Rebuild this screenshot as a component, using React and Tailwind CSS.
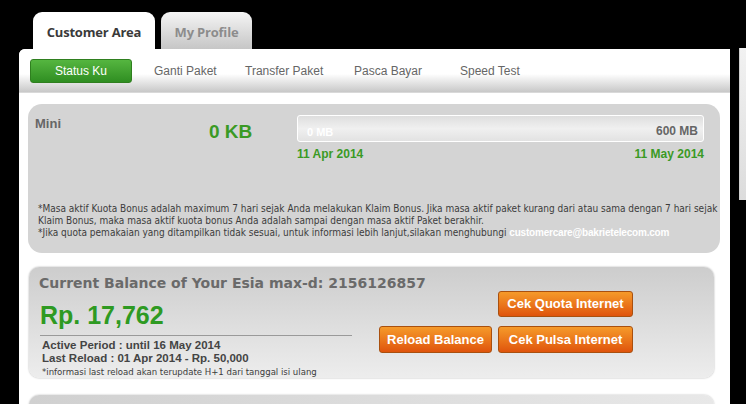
import React from "react";

const sans = "font-['Liberation_Sans',Arial,sans-serif]";
const tahoma = "font-['DejaVu_Sans_Condensed','DejaVu_Sans',sans-serif]";

function OrangeButton({ children, className = "h-[27px]" }) {
  return (
    <button
      className={`rounded-[3px] border border-[#a9500f] bg-linear-to-b from-[#f59a2a] to-[#df530b] text-white text-[13px] font-bold ${sans} ${className}`}
    >
      {children}
    </button>
  );
}

export default function App() {
  const navItems = ["Ganti Paket", "Transfer Paket", "Pasca Bayar", "Speed Test"];
  const navWidths = ["w-[91px]", "w-[109px]", "w-[106px]", "w-[80px]"];

  return (
    <div className="w-[746px] h-[404px] bg-black overflow-hidden">
      {/* tabs */}
      <div className="flex items-end gap-[6px] pl-[33px] pt-[12px] h-[49px]">
        <div className="w-[122px] h-[37px] rounded-t-[9px] bg-white flex items-center justify-center">
          <span className="font-['Open_Sans',sans-serif] font-bold text-[13px] text-[#3a3a3a] tracking-[-0.2px] mt-[5px]">Customer Area</span>
        </div>
        <div className="w-[91px] h-[37px] rounded-t-[9px] bg-linear-to-b from-[#f5f5f5] to-[#c6c6c6] flex items-center justify-center">
          <span className="font-['Open_Sans',sans-serif] font-bold text-[13px] text-[#8c8c8c] tracking-[-0.2px] mt-[4px]">My Profile</span>
        </div>
      </div>

      <div className="flex items-start">
        {/* main panel */}
        <div className="ml-[19px] w-[711px] h-[355px] bg-white rounded-tl-[6px] overflow-hidden">
          {/* sub nav */}
          <div className="h-[44px] flex items-center pl-[11px] bg-linear-to-b from-white from-[58%] to-[#c8c8c8] border-b border-[#d9d9d9]">
            <div className={`w-[102px] h-[24px] rounded-[3px] border border-[#2f7f1f] bg-linear-to-b from-[#55b640] to-[#2f8e21] flex items-center justify-center text-white text-[12px] ${sans}`}>
              Status Ku
            </div>
            <div className={`flex text-[12px] text-[#666] ${sans} ml-[22px] mt-[1px]`}>
              {navItems.map((t, i) => (
                <span key={t} className={navWidths[i]}>{t}</span>
              ))}
            </div>
          </div>

          {/* quota card */}
          <div className="ml-[9px] mt-[11px] w-[692px] h-[149px] rounded-[14px] bg-[#d4d4d4] pt-[11px]">
            <div className="flex">
              <div className={`w-[181px] pl-[7px] -mt-[1px] text-[13px] font-bold text-[#666] ${sans}`}>Mini</div>
              <div className={`w-[88px] pt-[3px] text-[19px] font-bold text-[#3a9a25] ${sans}`}>0 KB</div>
              <div className="w-[407px]">
                <div className="h-[27px] rounded-[3px] border border-white bg-linear-to-b from-[#dedede] via-[#f0f0f0] to-[#e2e2e2] flex items-end justify-between px-[9px] pb-[1px]">
                  <span className={`text-[11px] font-bold text-white ${sans}`}>0 MB</span>
                  <span className={`text-[12px] font-bold text-[#666] -mr-[4px] ${sans}`}>600 MB</span>
                </div>
                <div className={`flex justify-between mt-[3px] text-[12px] font-bold text-[#3a9a25] ${sans}`}>
                  <span>11 Apr 2014</span>
                  <span>11 May 2014</span>
                </div>
              </div>
            </div>
            <div className={`mt-[40px] pl-[10px] text-[10px] leading-[12px] text-[#3c3c3c] whitespace-nowrap ${tahoma}`}>
              *Masa aktif Kuota Bonus adalah maximum 7 hari sejak Anda melakukan Klaim Bonus. Jika masa aktif paket kurang dari atau sama dengan 7 hari sejak
              <br />
              Klaim Bonus, maka masa aktif kuota bonus Anda adalah sampai dengan masa aktif Paket berakhir.
              <br />
              *Jika quota pemakaian yang ditampilkan tidak sesuai, untuk informasi lebih lanjut,silakan menghubungi{" "}
              <span className={`text-white font-bold text-[10px] tracking-[-0.2px] ${sans}`}>customercare@bakrietelecom.com</span>
            </div>
          </div>

          {/* balance card */}
          <div className="ml-[10px] mt-[14px] w-[685px] h-[111px] rounded-[10px] bg-linear-to-b from-[#cdcdcd] to-[#ededed] shadow-[0_0_2px_rgba(0,0,0,0.35)] pt-[8px] pl-[10px]">
            <div className="font-['DejaVu_Sans',Verdana,sans-serif] font-bold text-[14px] leading-[16px] text-[#6a6a6a]">
              Current Balance of Your Esia max-d: 2156126857
            </div>
            <div className="flex items-start">
              <div className="w-[312px] ml-[1px]">
                <div className={`text-[25px] leading-[30px] mt-[9px] font-bold text-[#2e9a22] ${sans}`}>Rp. 17,762</div>
                <div className="h-px bg-[#9a9a9a] mt-[5px]" />
                <div className={`pl-[2px] pt-[3px] text-[11.5px] leading-[13px] font-bold text-[#444] ${sans}`}>
                  <div>Active Period : until 16 May 2014</div>
                  <div>Last Reload : 01 Apr 2014 - Rp. 50,000</div>
                </div>
                <div className={`pl-[2px] text-[9.5px] leading-[13px] text-[#3c3c3c] ${tahoma}`}>
                  *informasi last reload akan terupdate H+1 dari tanggal isi ulang
                </div>
              </div>
              <div className="ml-[27px] grid grid-cols-[113px_135px] content-start gap-x-[6px] gap-y-[9px]">
                <div />
                <OrangeButton className="h-[26px]">Cek Quota Internet</OrangeButton>
                <OrangeButton>Reload Balance</OrangeButton>
                <OrangeButton>Cek Pulsa Internet</OrangeButton>
              </div>
            </div>
          </div>

          {/* next card */}
          <div className="ml-[10px] mt-[17px] w-[685px] h-[40px] rounded-[10px] bg-linear-to-r from-[#d0d0d0] to-[#e8e8e8] shadow-[0_0_2px_rgba(0,0,0,0.3)]" />
        </div>

        {/* neighbour panel edge */}
        <div className="ml-[9px] mt-[-1px] w-[7px] h-[152px] bg-linear-to-b from-[#f2f2f2] to-[#dcdcdc] border-l border-[#cfcfcf]" />
      </div>
    </div>
  );
}
